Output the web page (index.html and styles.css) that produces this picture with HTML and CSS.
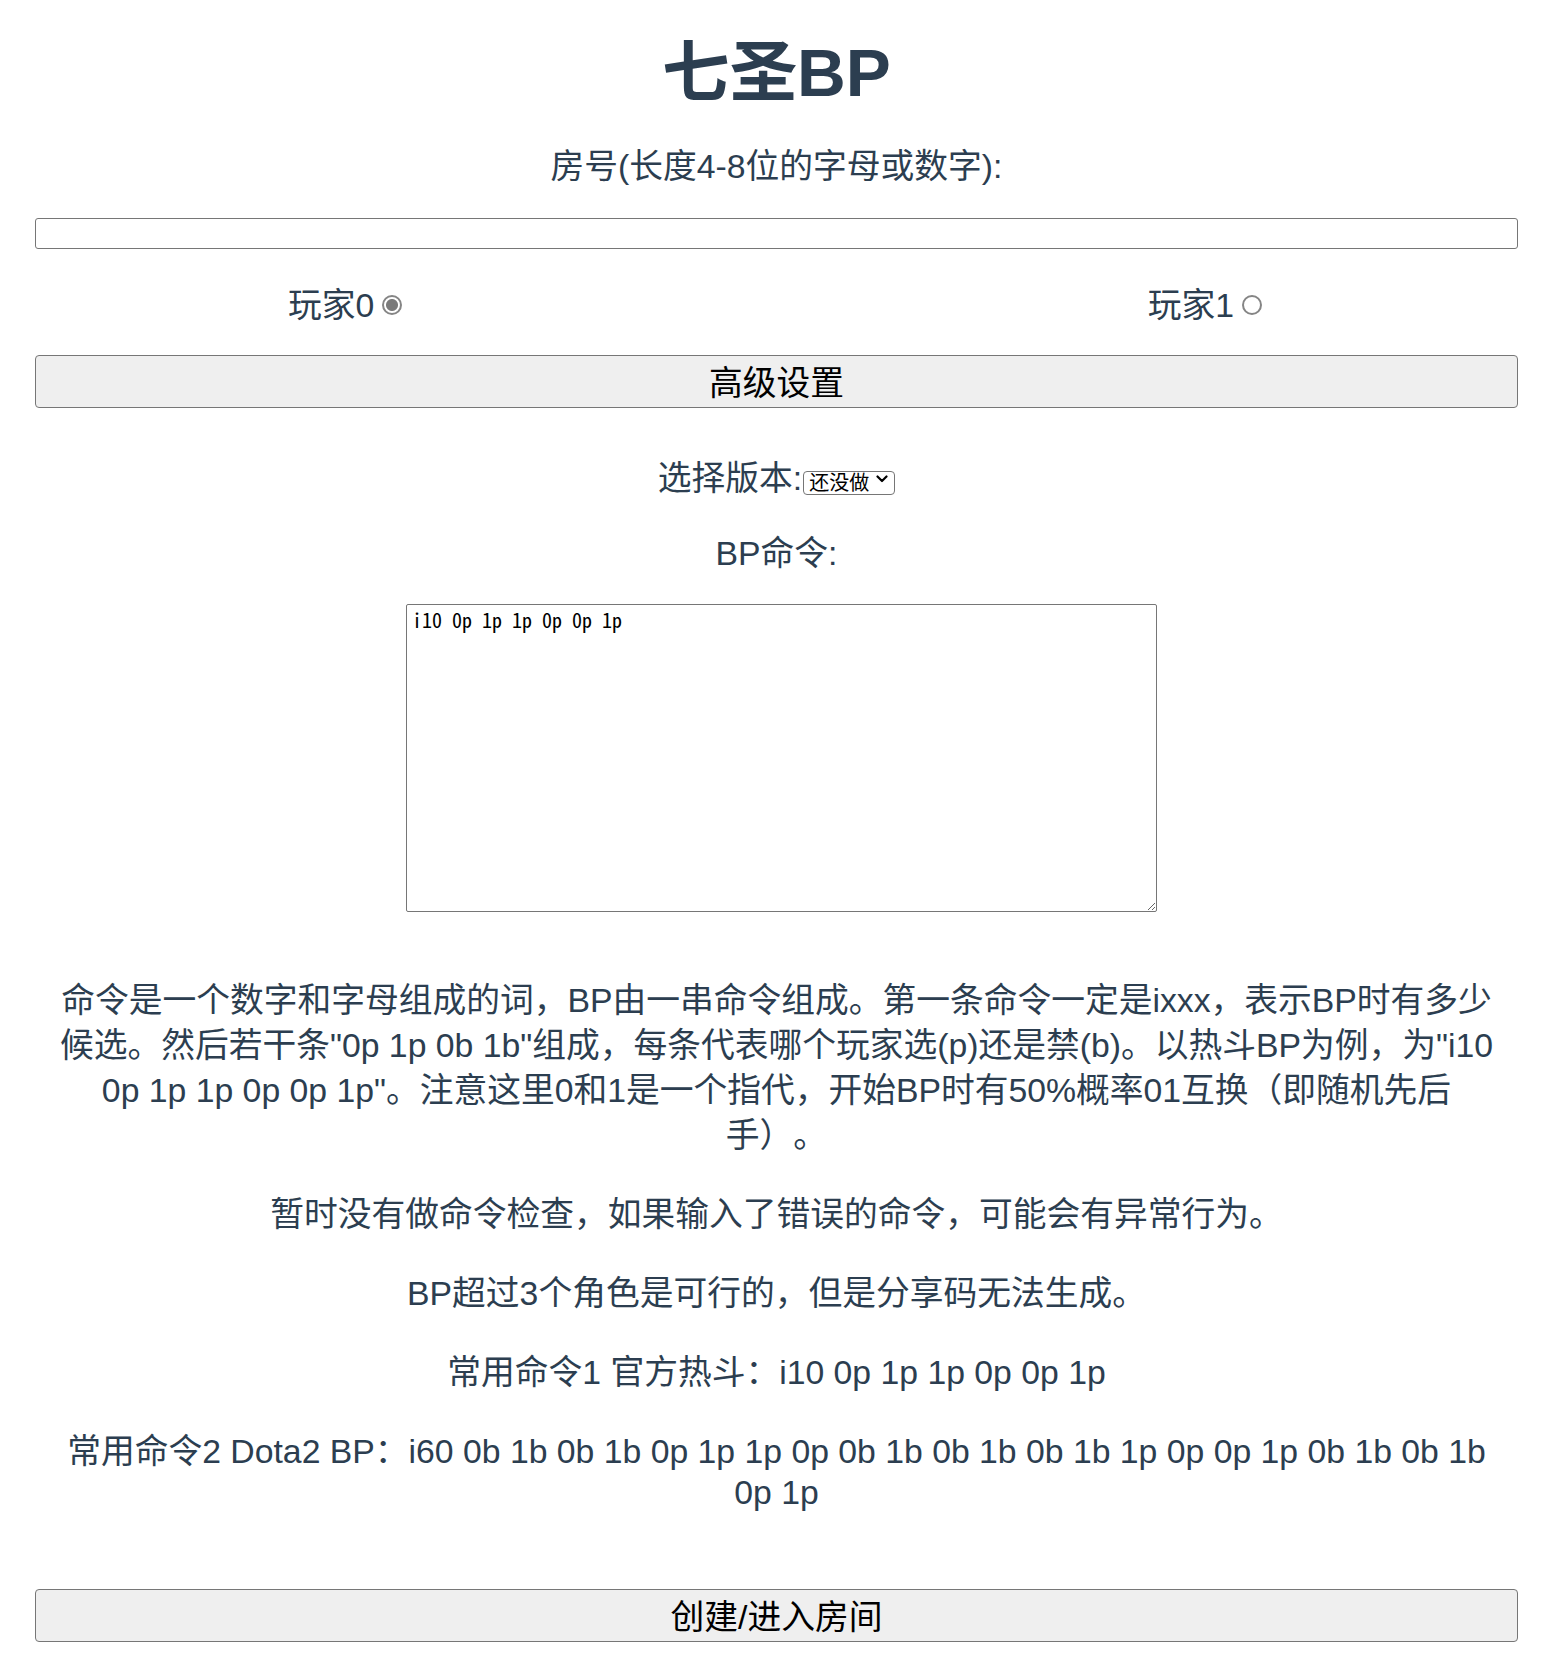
FILE: index.html
```html
<!DOCTYPE html>
<html lang="zh-CN">
<head>
<meta charset="utf-8">
<title>七圣BP</title>
<link rel="stylesheet" href="styles.css">
</head>
<body>
<div class="app">
  <h1 class="title">七圣BP</h1>
  <div class="field-label room-label">房号(长度4-8位的字母或数字):</div>
  <input class="room-input" type="text">
  <div class="players">
    <label class="player">玩家0<input type="radio" name="player" class="radio" checked></label>
    <label class="player">玩家1<input type="radio" name="player" class="radio"></label>
  </div>
  <button class="wide-btn adv-btn">高级设置</button>
  <div class="version">选择版本:<span class="select-wrap"><select class="version-select"><option>还没做</option></select><svg class="chevron" width="12" height="8" viewBox="0 0 12 8" aria-hidden="true"><path d="M1.5 1.5 L6 6 L10.5 1.5" fill="none" stroke="#000" stroke-width="2.2" stroke-linecap="round" stroke-linejoin="round"/></svg></span></div>
  <div class="field-label cmd-label">BP命令:</div>
  <textarea class="cmd">i10 0p 1p 1p 0p 0p 1p</textarea>
  <div class="notes">
    <p class="note">命令是一个数字和字母组成的词，BP由一串命令组成。第一条命令一定是ixxx，表示BP时有多少候选。然后若干条"0p 1p 0b 1b"组成，每条代表哪个玩家选(p)还是禁(b)。以热斗BP为例，为"i10 0p 1p 1p 0p 0p 1p"。注意这里0和1是一个指代，开始BP时有50%概率01互换（即随机先后手）。</p>
    <p class="note">暂时没有做命令检查，如果输入了错误的命令，可能会有异常行为。</p>
    <p class="note">BP超过3个角色是可行的，但是分享码无法生成。</p>
    <p class="note">常用命令1 官方热斗：i10 0p 1p 1p 0p 0p 1p</p>
    <p class="note note-tight">常用命令2 Dota2 BP：i60 0b 1b 0b 1b 0p 1p 1p 0p 0b 1b 0b 1b 0b 1b 1p 0p 0p 1p 0b 1b 0b 1b 0p 1p</p>
  </div>
  <button class="wide-btn enter-btn">创建/进入房间</button>
</div>
</body>
</html>
```

FILE: styles.css
```css
html, body {
  margin: 0;
  padding: 0;
  background: #ffffff;
}

.app {
  margin: 0 47px 0 35px;
  padding: 31.5px 0 32px;
  text-align: center;
  color: #2c3e50;
  font-family: "Liberation Sans", "Noto Sans CJK SC", sans-serif;
  font-size: 33.75px;
  line-height: 45px;
  text-spacing-trim: space-all;
}

.title {
  margin: 0;
  font-size: 67.5px;
  line-height: 81px;
  font-weight: bold;
}

.field-label {
  margin: 0;
}

.room-label {
  margin-top: 31.5px;
}

.room-input {
  display: block;
  box-sizing: border-box;
  width: 100%;
  height: 31px;
  margin: 29px 0 0;
  padding: 1px 3px;
  border: 1px solid #767676;
  border-radius: 3px;
  background: #fff;
  font-size: 20px;
}

.players {
  display: flex;
  justify-content: space-between;
  align-items: center;
  margin-top: 33.5px;
  padding: 0 256px 0 253px;
}

.player {
  display: inline-flex;
  align-items: center;
  gap: 8px;
}

.radio {
  appearance: none;
  -webkit-appearance: none;
  box-sizing: border-box;
  width: 20px;
  height: 20px;
  margin: 0;
  border: 2px solid #858585;
  border-radius: 50%;
  background: #fff;
}

.radio:checked {
  background: radial-gradient(circle, #7a7a7a 0 5.5px, #ffffff 6.5px);
}

.wide-btn {
  display: block;
  box-sizing: border-box;
  width: 100%;
  height: 53px;
  padding: 4px 0 0;
  border: 1px solid #767676;
  border-radius: 4px;
  background: #efefef;
  color: #000;
  font-family: "Liberation Sans", "Noto Sans CJK SC", sans-serif;
  font-size: 33.75px;
  line-height: 45px;
  text-spacing-trim: space-all;
}

.adv-btn {
  margin-top: 27.5px;
}

.version {
  margin-top: 48px;
}

.select-wrap {
  position: relative;
  display: inline-block;
  margin-left: 1px;
  vertical-align: baseline;
}

.version-select {
  appearance: none;
  -webkit-appearance: none;
  box-sizing: border-box;
  width: 92px;
  height: 24px;
  margin: 0;
  padding: 0 22px 0 5px;
  font-family: "Liberation Sans", "Noto Sans CJK SC", sans-serif;
  font-size: 20px;
  line-height: 22px;
  color: #000;
  border: 1px solid #767676;
  border-radius: 4px;
  background-color: #fff;
  vertical-align: baseline;
}

.chevron {
  position: absolute;
  right: 7px;
  top: 50%;
  margin-top: -4px;
  pointer-events: none;
}

.cmd-label {
  margin-top: 30px;
}

.cmd {
  display: block;
  box-sizing: border-box;
  width: 751px;
  height: 308px;
  margin: 28px 0 0 371px;
  padding: 3px 5px;
  border: 1px solid #767676;
  border-radius: 2px;
  font-family: "Noto Sans Mono CJK SC", "Liberation Mono", monospace;
  font-size: 20px;
  line-height: 24px;
  color: #000;
  resize: both;
}

.notes {
  display: flex;
  flex-direction: column;
  gap: 34px;
  margin-top: 66px;
  padding: 0 18.5px;
}

.note {
  margin: 0;
}

.note-tight {
  margin-top: 1.5px;
  line-height: 41px;
}

.enter-btn {
  margin-top: 76px;
}
```
